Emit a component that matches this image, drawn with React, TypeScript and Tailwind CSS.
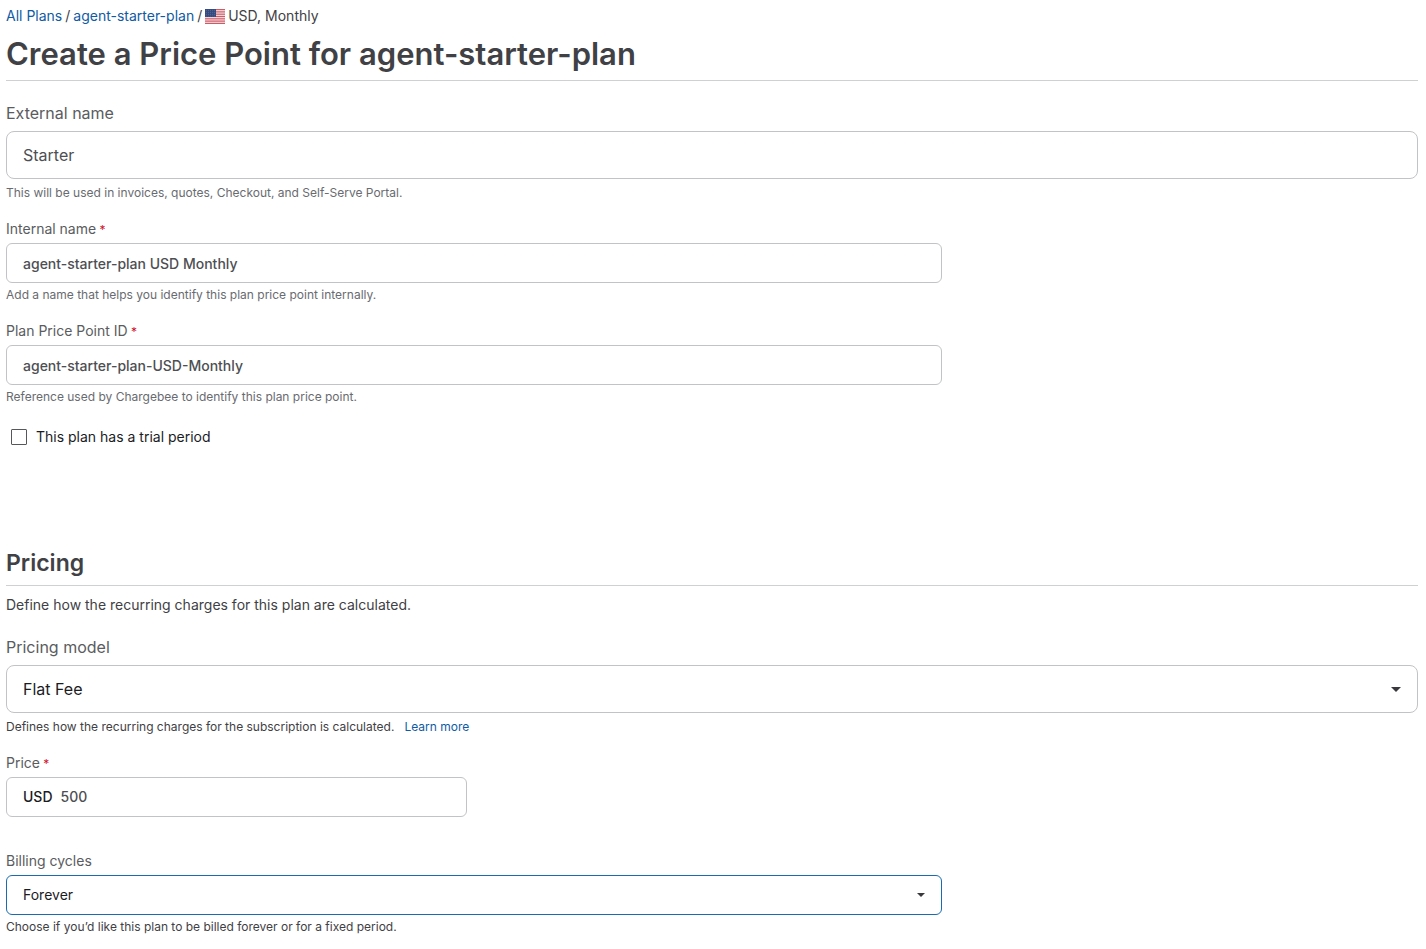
import type { ReactNode } from "react";

function Flag() {
  return (
    <svg viewBox="0 0 20 15" className="h-[15px] w-5" role="img" aria-label="United States">
      <rect width="20" height="15" rx="1" fill="#f3dfe2" />
      {[0, 1, 2, 3, 4, 5, 6].map((i) => (
        <rect key={i} y={i * 2.308} width="20" height="1.154" fill="#cf5a66" />
      ))}
      <rect width="11" height="8" fill="#35487f" />
      {[1.2, 3.2, 5.2, 7].map((y) =>
        [1.2, 3.4, 5.6, 7.8, 9.8].map((x) => <circle key={`${x}-${y}`} cx={x} cy={y} r="0.35" fill="#9aa6cb" />)
      )}
    </svg>
  );
}

function Label({ id, large, required, children }: { id: string; large?: boolean; required?: boolean; children: ReactNode }) {
  return (
    <label htmlFor={id} className={large ? "block text-base leading-6 text-[#5a5c60]" : "block text-sm leading-5 text-[#5a5c60]"}>
      {children}
      {required && <span className="text-xs leading-4 text-[#d0102c]"> *</span>}
    </label>
  );
}

const caret = (
  <svg viewBox="0 0 10 5" className="h-full w-full" aria-hidden="true">
    <path d="M0 0h10L5 5z" fill="#38393c" />
  </svg>
);

export default function App() {
  return (
    <main className="px-[6px] pt-[6px] pr-2 font-['Inter',sans-serif] text-[#3f4145]">
      <nav aria-label="Breadcrumb" className="flex h-5 items-center gap-[3px] text-sm leading-5">
        <a href="#plans" className="text-[#105ba3]">All Plans</a>
        <span>/</span>
        <a href="#plan" className="text-[#105ba3]">agent-starter-plan</a>
        <span>/</span>
        <Flag />
        <span>USD, Monthly</span>
      </nav>
      <h1 className="mt-2 border-b border-[#cfd0d2] pb-[6px] text-[31px] leading-10 font-semibold">
        Create a Price Point for agent-starter-plan
      </h1>

      <div className="mt-5">
        <Label id="external" large>External name</Label>
        <input id="external" defaultValue="Starter" className="mt-[6px] block h-12 w-full rounded-lg border border-[#c2c3c6] px-4 text-base text-[#4d4f53]" />
        <p className="mt-[6px] text-xs leading-4 text-[#696b70]">This will be used in invoices, quotes, Checkout, and Self-Serve Portal.</p>
      </div>
      <div className="mt-[18px]">
        <Label id="internal" required>Internal name</Label>
        <input id="internal" defaultValue="agent-starter-plan USD Monthly" className="mt-1 block h-10 w-[936px] max-w-full rounded-md border border-[#c2c3c6] px-4 text-sm font-medium text-[#4d4f53]" />
        <p className="mt-1 text-xs leading-4 text-[#696b70]">Add a name that helps you identify this plan price point internally.</p>
      </div>
      <div className="mt-[18px]">
        <Label id="pointid" required>Plan Price Point ID</Label>
        <input id="pointid" defaultValue="agent-starter-plan-USD-Monthly" className="mt-1 block h-10 w-[936px] max-w-full rounded-md border border-[#c2c3c6] px-4 text-sm font-medium text-[#4d4f53]" />
        <p className="mt-1 text-xs leading-4 text-[#696b70]">Reference used by Chargebee to identify this plan price point.</p>
      </div>
      <label className="mt-[22px] flex w-fit items-center gap-[9px] pl-[5px] text-sm leading-5 text-[#1b1c1f]">
        <input type="checkbox" className="size-4 appearance-none rounded-[1px] border border-[#55575b] checked:bg-[#105ba3]" />
        This plan has a trial period
      </label>

      <section className="mt-[100px]">
        <h2 className="border-b border-[#cfd0d2] pb-[6px] text-[23px] leading-8 font-semibold">Pricing</h2>
        <p className="mt-[9px] text-sm leading-5">Define how the recurring charges for this plan are calculated.</p>
        <div className="mt-5">
          <Label id="model" large>Pricing model</Label>
          <div className="relative mt-[6px]">
            <select id="model" className="block h-12 w-full appearance-none rounded-lg border border-[#c2c3c6] bg-white px-4 text-base text-[#1b1c1f]">
              <option>Flat Fee</option>
            </select>
            <span className="pointer-events-none absolute inset-y-0 right-[17px] flex items-center">
              <span className="h-[5px] w-[10px]">{caret}</span>
            </span>
          </div>
          <p className="mt-[6px] flex gap-[10px] text-xs leading-4">
            Defines how the recurring charges for the subscription is calculated.
            <a href="#learn" className="text-[#105ba3]">Learn more</a>
          </p>
        </div>
        <div className="mt-[18px]">
          <Label id="price" required>Price</Label>
          <div className="mt-1 flex h-10 w-[461px] max-w-full items-center gap-2 rounded-md border border-[#c2c3c6] px-4 text-sm font-medium">
            <span className="text-[#1b1c1f]">USD</span>
            <input id="price" defaultValue="500" className="min-w-0 flex-1 text-[#4d4f53] outline-none" />
          </div>
        </div>
        <div className="mt-[34px]">
          <Label id="cycles">Billing cycles</Label>
          <div className="relative mt-1 w-[936px] max-w-full">
            <select id="cycles" className="block h-10 w-full appearance-none rounded-md border border-[#1a6bb0] bg-white px-4 text-sm text-[#1b1c1f]">
              <option>Forever</option>
            </select>
            <span className="pointer-events-none absolute inset-y-0 right-[17px] flex items-center">
              <span className="h-1 w-2">{caret}</span>
            </span>
          </div>
          <p className="mt-1 text-xs leading-4">Choose if you’d like this plan to be billed forever or for a fixed period.</p>
        </div>
      </section>
    </main>
  );
}
